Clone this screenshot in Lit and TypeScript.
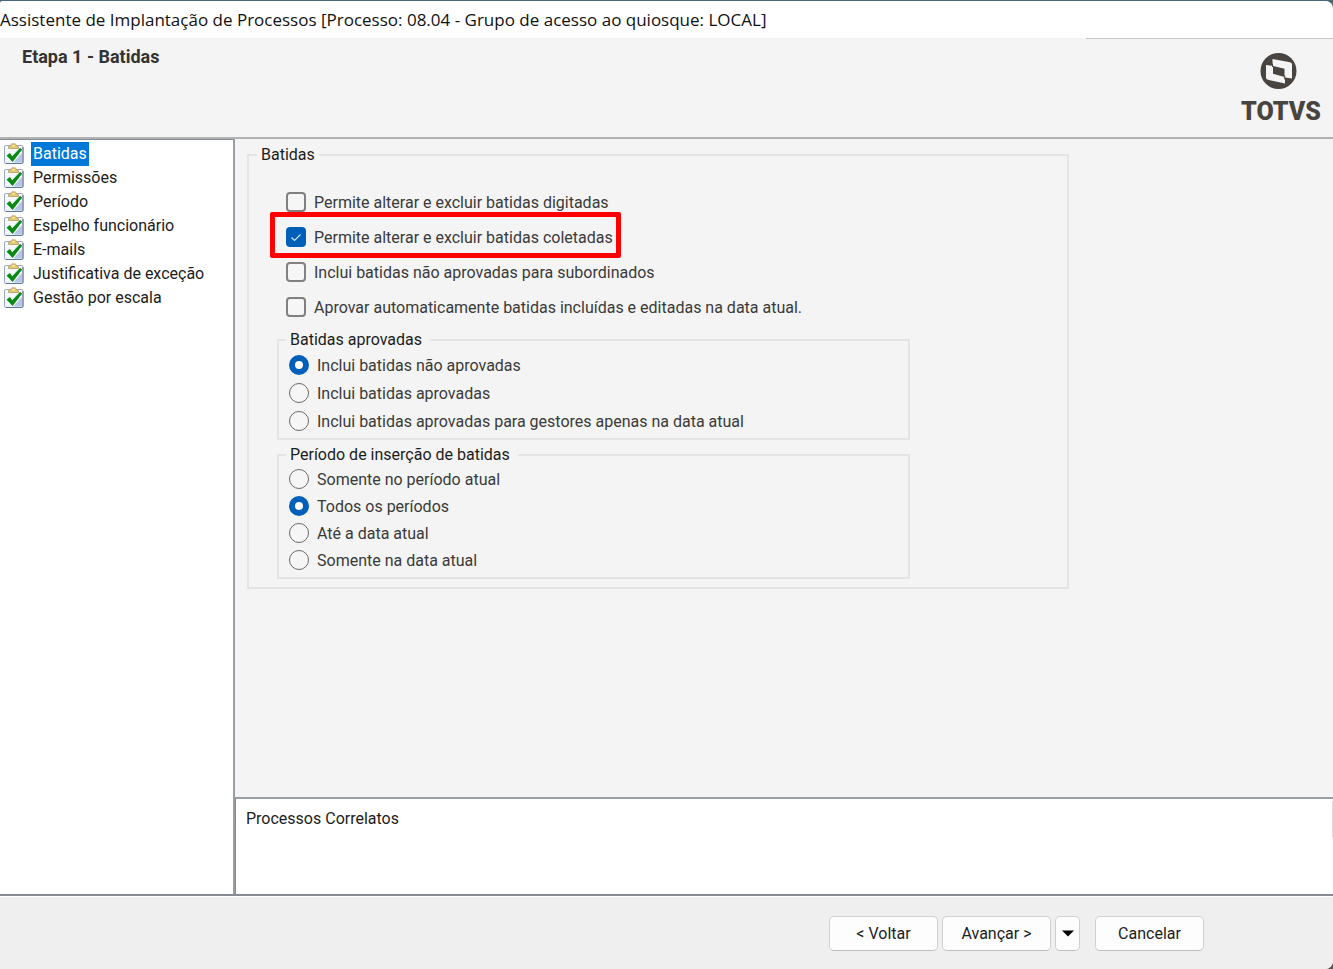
import { LitElement, html, css, svg } from "lit";
import { customElement, property, state } from "lit/decorators.js";

interface Choice {
  label: string;
  checked?: boolean;
  highlighted?: boolean;
}

const STEPS = [
  "Batidas",
  "Permissões",
  "Período",
  "Espelho funcionário",
  "E-mails",
  "Justificativa de exceção",
  "Gestão por escala",
];

const PERMISSIONS: Choice[] = [
  { label: "Permite alterar e excluir batidas digitadas" },
  { label: "Permite alterar e excluir batidas coletadas", checked: true, highlighted: true },
  { label: "Inclui batidas não aprovadas para subordinados" },
  { label: "Aprovar automaticamente batidas incluídas e editadas na data atual." },
];

const APPROVED: Choice[] = [
  { label: "Inclui batidas não aprovadas", checked: true },
  { label: "Inclui batidas aprovadas" },
  { label: "Inclui batidas aprovadas para gestores apenas na data atual" },
];

const PERIODS: Choice[] = [
  { label: "Somente no período atual" },
  { label: "Todos os períodos", checked: true },
  { label: "Até a data atual" },
  { label: "Somente na data atual" },
];

const clipboard = svg`
  <rect x="0.5" y="2.5" width="18.5" height="18" rx="1.5" fill="#f4f8ff" stroke="#9aa8c6"/>
  <path d="M9 20 18 10V19.5H9Z" fill="#b3c5e4"/>
  <path d="M19 4V19Q19 20.5 17.5 20.5H2" fill="none" stroke="#62739b"/>
  <path d="M4.5 5.5H14.5V4Q14.5 3 12.8 3C12.4 1.2 11.2 .7 9.5 .7S6.6 1.2 6.2 3Q4.5 3 4.5 4Z" fill="#e2c878" stroke="#b49c5c" stroke-width=".8"/>
  <circle cx="9.5" cy="2.8" r=".9" fill="#fff8d8"/>
  <path d="M2.5 12.5 5.8 10 8.2 13.200 16 5 18.200 6.500 8.600 19Z" fill="#078a12"/>
`;

@customElement("step-list")
export class StepList extends LitElement {
  @property({ type: Number }) current = 0;

  static styles = css`
    :host {
      display: block;
      padding: 2px 4px;
    }
    .steps {
      list-style: none;
      margin: 0;
      padding: 0;
    }
    .step {
      display: flex;
      align-items: flex-start;
      gap: 7px;
      height: 24px;
      color: #1c1c1c;
      text-decoration: none;
    }
    .icon {
      flex: none;
      width: 20px;
      height: 21px;
      margin-top: 1px;
    }
    .name {
      padding: 0 2px;
      line-height: 24px;
      white-space: nowrap;
    }
    .current .name {
      background: #0078d7;
      color: #fff;
    }
  `;

  private pick(event: Event, index: number) {
    event.preventDefault();
    this.current = index;
  }

  render() {
    return html`<ul class="steps">
      ${STEPS.map(
        (name, i) => html`<li>
          <a class="step ${i === this.current ? "current" : ""}" href="#" @click=${(e: Event) => this.pick(e, i)}>
            <svg class="icon" viewBox="0 0 20 21" aria-hidden="true">${clipboard}</svg>
            <span class="name">${name}</span>
          </a>
        </li>`
      )}
    </ul>`;
  }
}

@customElement("app-root")
export class AppRoot extends LitElement {
  @state() private step = 0;

  static styles = css`
    :host {
      display: flex;
      flex-direction: column;
      box-sizing: border-box;
      min-height: 100vh;
      padding-top: 1px;
      background: linear-gradient(#466a7c, #555);
      font: 16px/20px Roboto, "Liberation Sans", sans-serif;
      color: #1c1c1c;
    }
    .window {
      flex: 1;
      display: flex;
      flex-direction: column;
      overflow: hidden;
      border-radius: 3px 8px 8px 0;
      background: #f4f4f4;
    }
    .titlebar {
      margin: 0;
      padding: 7px 0 6px;
      background: #fff;
      color: #111;
      font: 17px/24px "Open Sans", "Noto Sans", sans-serif;
      white-space: nowrap;
    }
    .header {
      position: relative;
      display: flex;
      justify-content: space-between;
      box-sizing: border-box;
      min-height: 101px;
      padding: 9px 12px 0 22px;
      border-bottom: 2px solid #b0b1b3;
    }
    .header::before {
      content: "";
      position: absolute;
      top: 0;
      right: 0;
      width: 247px;
      border-top: 1px solid #c6c6c6;
    }
    .heading {
      margin: 0;
      font: 700 18px/20px Roboto, sans-serif;
      color: #333;
    }
    .logo {
      width: 80px;
      height: 76px;
      margin-top: 4px;
    }
    .wordmark {
      font: 900 25px Roboto, sans-serif;
      fill: #4a4440;
    }
    .body {
      flex: 1;
      display: grid;
      grid-template-columns: 235px 1fr;
      border-bottom: 2px solid #868b93;
    }
    .sidebar {
      border-top: 1px solid #868b93;
      border-right: 2px solid #9a9ea5;
      background: #fff;
    }
    .main {
      display: flex;
      flex-direction: column;
      min-width: 0;
    }
    .form {
      flex: 1;
      padding: 6px 12px;
    }
    .group {
      box-sizing: border-box;
      min-width: 0;
      margin: 0;
      border: 2px solid #e4e4e4;
    }
    .group legend {
      padding: 0 8px 0 4px;
      line-height: 20px;
    }
    .outer {
      max-width: 822px;
      padding: 27px 28px 8px;
    }
    .outer > legend {
      margin-left: -20px;
      padding: 0 4px;
    }
    .inner {
      max-width: 633px;
      padding: 5px 10px 7px;
    }
    .inner > legend {
      margin-left: -3px;
    }
    .approved {
      margin-top: 13px;
    }
    .period {
      margin-top: 5px;
      padding-top: 4px;
    }
    .choices {
      display: flex;
      flex-direction: column;
      align-items: flex-start;
      gap: 8px;
    }
    .checks {
      gap: 15px;
      padding-left: 9px;
    }
    .period .choices {
      gap: 7px;
    }
    .choice {
      position: relative;
      display: flex;
      align-items: center;
      gap: 8px;
      color: #3a3a3a;
    }
    .caption {
      padding-top: 2px;
      line-height: 18px;
    }
    .highlighted::after {
      content: "";
      position: absolute;
      inset: -15px -8px -11px -16px;
      border: 5px solid #fe0000;
      border-radius: 2px;
      pointer-events: none;
    }
    .tick,
    .dot {
      appearance: none;
      flex: none;
      box-sizing: border-box;
      width: 20px;
      height: 20px;
      margin: 0;
      border: 1px solid #6a6a6a;
      background: #f6f6f6;
    }
    .tick {
      border-width: 2px;
      border-color: #808080;
      border-radius: 4px;
    }
    .dot {
      border-radius: 50%;
    }
    .tick:checked {
      border-color: #005fb8;
      background: #005fb8
        url("data:image/svg+xml,%3Csvg xmlns='http://www.w3.org/2000/svg' viewBox='0 0 16 16'%3E%3Cpath d='M3.5 8.5 6.5 11.5 12.5 5.5' fill='none' stroke='%23d5e6f5' stroke-width='1.2'/%3E%3C/svg%3E")
        center / 16px 16px no-repeat;
    }
    .dot:checked {
      border: 6px solid #005fb8;
      background: #fff;
    }
    .related {
      position: relative;
      box-sizing: border-box;
      min-height: 97px;
      padding: 10px;
      border-top: 2px solid #9a9ea5;
      border-left: 1px solid #868b93;
      background: #fff;
    }
    .related::after {
      content: "";
      position: absolute;
      top: 2px;
      right: 0;
      height: 36px;
      border-right: 1px solid #dcdcdc;
    }
    .related-title {
      margin: 0;
      font-size: 16px;
      font-weight: 400;
    }
    .footer {
      display: flex;
      justify-content: flex-end;
      gap: 4px;
      padding: 19px 129px 18px 16px;
      border-top: 1px solid #fff;
      background: #efefef;
    }
    .button {
      box-sizing: border-box;
      width: 109px;
      height: 35px;
      padding: 0;
      border: 1px solid #d0d0d0;
      border-bottom-color: #bdbdbd;
      border-radius: 5px;
      background: #fdfdfd;
      color: #1c1c1c;
      font: inherit;
    }
    .drop {
      width: 25px;
    }
    .arrow {
      display: block;
      width: 12px;
      height: 7px;
      margin: 0 auto;
    }
    .cancel {
      margin-left: 11px;
    }
  `;

  private radios(name: string, items: Choice[]) {
    return html`<div class="choices">
      ${items.map(
        (item) => html`<label class="choice">
          <input class="dot" type="radio" name=${name} ?checked=${item.checked} /><span class="caption">${item.label}</span>
        </label>`
      )}
    </div>`;
  }

  render() {
    return html`
      <div class="window">
        <h1 class="titlebar">Assistente de Implantação de Processos [Processo: 08.04 - Grupo de acesso ao quiosque: LOCAL]</h1>
        <header class="header">
          <h2 class="heading">Etapa 1 - Batidas</h2>
          <svg class="logo" viewBox="0 0 80 76" role="img" aria-label="TOTVS">
            <circle cx="37.5" cy="20" r="18" fill="#4a4440" />
            <path
              fill="#f4f4f4"
              fill-rule="evenodd"
              d="M31.500 8 49 11.200Q51 11.700 51 13V27.500L44 26.500V32.500L27 28.800Q25 28.300 25 27V14L31.500 14.800Z M32 15V22.800L43.500 26V17.800Z"
            />
            <path d="M31.5 12.5V16M43.700 24.500V28.500" stroke="#4a4440" stroke-width="1" fill="none" />
            <text class="wordmark" x="40" y="69" text-anchor="middle">TOTVS</text>
          </svg>
        </header>
        <div class="body">
          <nav class="sidebar"><step-list .current=${this.step}></step-list></nav>
          <main class="main">
            <form class="form">
              <fieldset class="group outer">
                <legend>Batidas</legend>
                <div class="choices checks">
                  ${PERMISSIONS.map(
                    (item) => html`<label class="choice ${item.highlighted ? "highlighted" : ""}">
                      <input class="tick" type="checkbox" ?checked=${item.checked} /><span class="caption">${item.label}</span>
                    </label>`
                  )}
                </div>
                <fieldset class="group inner approved">
                  <legend>Batidas aprovadas</legend>
                  ${this.radios("approved", APPROVED)}
                </fieldset>
                <fieldset class="group inner period">
                  <legend>Período de inserção de batidas</legend>
                  ${this.radios("period", PERIODS)}
                </fieldset>
              </fieldset>
            </form>
            <section class="related">
              <h3 class="related-title">Processos Correlatos</h3>
            </section>
          </main>
        </div>
        <footer class="footer">
          <button class="button" type="button">&lt; Voltar</button>
          <button class="button" type="button">Avançar &gt;</button>
          <button class="button drop" type="button" aria-label="Mais opções">
            <svg class="arrow" viewBox="0 0 12 7" aria-hidden="true"><path d="M0 .5H12L6 6.5Z" fill="#000" /></svg>
          </button>
          <button class="button cancel" type="button">Cancelar</button>
        </footer>
      </div>
    `;
  }
}
